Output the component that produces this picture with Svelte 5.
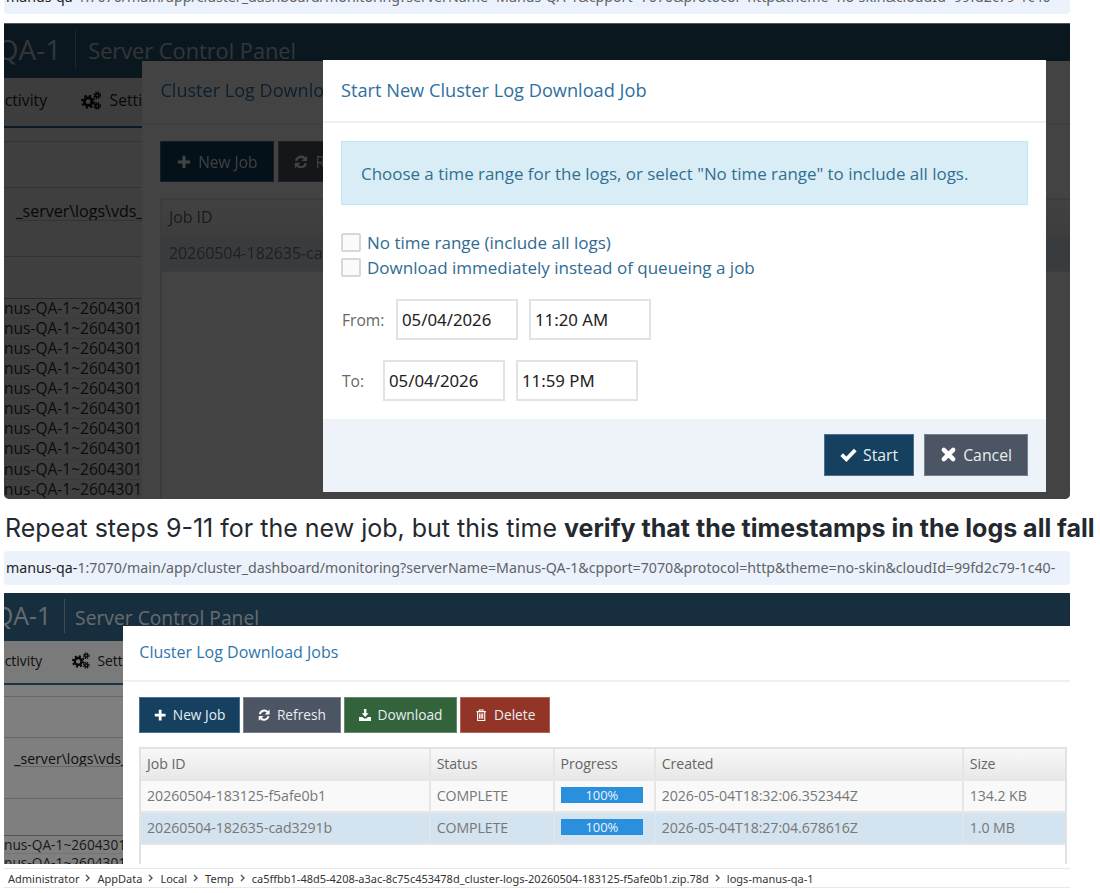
<script>
	const url = '1:7070/main/app/cluster_dashboard/monitoring?serverName=Manus-QA-1&cpport=7070&protocol=http&theme=no-skin&cloudId=99fd2c79-1c40-';
	const jobs = [
		{ id: '20260504-183125-f5afe0b1', status: 'COMPLETE', created: '2026-05-04T18:32:06.352344Z', size: '134.2 KB' },
		{ id: '20260504-182635-cad3291b', status: 'COMPLETE', created: '2026-05-04T18:27:04.678616Z', size: '1.0 MB', selected: true }
	];
	const crumbs = ['Administrator', 'AppData', 'Local', 'Temp', 'ca5ffbb1-48d5-4208-a3ac-8c75c453478d_cluster-logs-20260504-183125-f5afe0b1.zip.78d', 'logs-manus-qa-1'];
	const logRows = Array(10).fill('nus-QA-1~2604301');
</script>

{#snippet plus()}
	<svg class="ic" viewBox="0 0 16 16"><path d="M6.2 1h3.6v5.2H15v3.6H9.8V15H6.2V9.8H1V6.2h5.2z" fill="currentColor" /></svg>
{/snippet}
{#snippet refresh()}
	<svg class="ic" viewBox="0 0 16 16"><path d="M2.4 6.6A5.8 5.8 0 0 1 12.4 4M13.6 9.4A5.8 5.8 0 0 1 3.6 12" fill="none" stroke="currentColor" stroke-width="2.6" /><path d="M15 .8v6.2H8.8zM1 15.2V9h6.2z" fill="currentColor" /></svg>
{/snippet}
{#snippet download()}
	<svg class="ic" viewBox="0 0 16 16"><path d="M6.4 0h3.2v5.4h2.8L8 10.4 3.6 5.4h2.8zM0 10.4h4.4L6.4 12.4h3.2l2-2H16V15.4H0z" fill="currentColor" /></svg>
{/snippet}
{#snippet trash()}
	<svg class="ic" viewBox="0 0 16 16"><path d="M5.6 3V1.2h4.8V3M2 3.4h12M3.4 3.4v11.4h9.2V3.4M6 5.8v6.8M8 5.8v6.8M10 5.8v6.8" fill="none" stroke="currentColor" stroke-width="1.4" /></svg>
{/snippet}
{#snippet check()}
	<svg class="ic" viewBox="0 0 16 16"><path d="M1.6 8.2l4.4 4.4 8.4-8.8" fill="none" stroke="currentColor" stroke-width="3.6" /></svg>
{/snippet}
{#snippet times()}
	<svg class="ic" viewBox="0 0 16 16"><path d="M3.6 3.6l8.8 8.8M12.4 3.6l-8.8 8.8" fill="none" stroke="currentColor" stroke-width="4.2" stroke-linecap="round" /></svg>
{/snippet}
{#snippet cogs()}
	<svg class="cogs" viewBox="0 0 20 18">
		<g fill="none" stroke="currentColor">
			<circle cx="7.5" cy="10" r="3.6" stroke-width="2.6" />
			<circle cx="7.5" cy="10" r="5.6" stroke-width="2" stroke-dasharray="2.2 2.2" />
			<circle cx="16" cy="4" r="1.6" stroke-width="1.6" />
			<circle cx="16" cy="4" r="3" stroke-width="1.3" stroke-dasharray="1.3 1.1" />
			<circle cx="16" cy="14" r="1.6" stroke-width="1.6" />
			<circle cx="16" cy="14" r="3" stroke-width="1.3" stroke-dasharray="1.3 1.1" />
		</g>
	</svg>
{/snippet}

{#snippet appPage()}
	<div class="page">
		<header class="app-head">
			<span class="brand">QA-1</span>
			<span class="sub">Server Control Panel</span>
		</header>
		<nav class="app-nav">
			<span class="tab">ctivity</span>
			{@render cogs()}
			<span class="tab">Settings</span>
		</nav>
		<div class="sec s1"></div>
		<div class="sec s2"></div>
		<div class="sec s3">_server\logs\vds_server.log</div>
		<div class="sec s4"></div>
		<div class="sec s5"></div>
		{#each logRows as row}
			<div class="log-row">{row}</div>
		{/each}
	</div>
{/snippet}

{#snippet jobsModal(rows)}
	<div class="backdrop"></div>
	<section class="jobs">
		<h3 class="jobs-title">Cluster Log Download Jobs</h3>
		<div class="toolbar">
			<button class="btn navy">{@render plus()}New Job</button>
			<button class="btn slate">{@render refresh()}Refresh</button>
			<button class="btn green">{@render download()}Download</button>
			<button class="btn red">{@render trash()}Delete</button>
		</div>
		<div class="grid-wrap">
			<div class="jobs-row head">
				<span>Job ID</span><span>Status</span><span>Progress</span><span>Created</span><span>Size</span>
			</div>
			{#each rows as job}
				<div class="jobs-row" class:selected={job.selected}>
					<span>{job.id}</span>
					<span>{job.status}</span>
					<span class="prog"><i>100%</i></span>
					<span>{job.created}</span>
					<span>{job.size}</span>
				</div>
			{/each}
		</div>
	</section>
{/snippet}

<main>
	<div class="url-bar clipped"><b>manus-qa-</b>{url}</div>

	<div class="shot first">
		{@render appPage()}
		{@render jobsModal([jobs[1]])}
		<div class="backdrop"></div>
		<section class="form-modal">
			<h3>Start New Cluster Log Download Job</h3>
			<div class="body">
				<div class="alert">Choose a time range for the logs, or select "No time range" to include all logs.</div>
				<label class="chk"><span class="box"></span>No time range (include all logs)</label>
				<label class="chk"><span class="box"></span>Download immediately instead of queueing a job</label>
				<div class="range from">
					<span>From:</span>
					<span class="field">05/04/2026</span>
					<span class="field">11:20 AM</span>
				</div>
				<div class="range to">
					<span>To:</span>
					<span class="field">05/04/2026</span>
					<span class="field">11:59 PM</span>
				</div>
			</div>
			<footer>
				<button class="btn navy">{@render check()}Start</button>
				<button class="btn slate">{@render times()}Cancel</button>
			</footer>
		</section>
	</div>

	<p class="step">Repeat steps 9-11 for the new job, but this time <strong>verify that the timestamps in the logs all fall</strong></p>

	<div class="url-bar"><b>manus-qa-</b>{url}</div>

	<div class="shot second">
		{@render appPage()}
		{@render jobsModal(jobs)}
	</div>

	<div class="crumbs">
		{#each crumbs as c, i}
			{#if i > 0}
				<svg class="chev" viewBox="0 0 8 8"><path d="M2 1l3 3-3 3" fill="none" stroke="#555" stroke-width="1.4" /></svg>
			{/if}
			<span>{c}</span>
		{/each}
	</div>
</main>

<style>
	:global(body) {
		margin: 0;
		background: #fff;
	}

	main {
		width: 1100px;
		height: 893px;
		overflow: hidden;
		padding: 0 0 0 4px;
		box-sizing: border-box;
		font-family: 'Open Sans', sans-serif;
	}

	.url-bar {
		width: 1066px;
		height: 34px;
		line-height: 34px;
		background: #ecf2fb;
		border-radius: 4px;
		padding-left: 2px;
		box-sizing: border-box;
		font-family: 'Noto Sans', sans-serif;
		font-size: 14.2px;
		color: #5f6368;
		white-space: nowrap;
		overflow: hidden;
	}

	.url-bar b {
		font-weight: 400;
		color: #222;
	}

	.url-bar.clipped {
		margin-top: -20px;
	}

	.shot {
		position: relative;
		width: 1066px;
		overflow: hidden;
		color: #333;
	}

	.shot.first {
		height: 476px;
		margin-top: 9px;
		font-size: 16px;
		border-radius: 0 0 5px 5px;
		border-top: 1px solid #555;
		box-sizing: border-box;
	}

	.shot.second {
		height: 271px;
		margin-top: 8px;
		font-size: 14.16px;
	}

	.page {
		position: relative;
		height: 100%;
		background: #fff;
	}

	.app-head {
		height: 3.4em;
		background: #2f5d7c;
		display: flex;
		align-items: center;
		color: #ccd6dd;
		overflow: hidden;
		white-space: nowrap;
	}

	.brand {
		font-size: 1.75em;
		padding-right: 0.5em;
		margin-left: -0.26em;
		border-right: 1px solid #7d99ad;
		height: 1.38em;
		line-height: 1.38em;
		margin-top: -0.12em;
	}

	.second .brand {
		margin-left: -0.4em;
		margin-top: -0.1em;
	}

	.sub {
		font-size: 1.36em;
		margin-left: 0.55em;
		margin-top: 0.08em;
	}

	.first .sub {
		margin-top: -0.05em;
	}

	.app-nav {
		height: 3.1em;
		background: #f4f4f4;
		border-bottom: 2px solid #2f6a96;
		box-sizing: border-box;
		display: flex;
		align-items: center;
		white-space: nowrap;
		font-size: 1em;
		color: #222;
		padding-bottom: 0.25em;
	}

	.tab {
		font-size: 0.98em;
	}

	.tab:first-child {
		margin-right: 2.1em;
		margin-left: 0.05em;
	}

	.cogs {
		width: 1.35em;
		height: 1.2em;
		margin-right: 0.5em;
		color: #111;
	}

	.sec {
		border-bottom: 1px solid #cfcfcf;
		box-sizing: border-box;
		white-space: nowrap;
		overflow: hidden;
		color: #222;
		font-size: 1em;
	}

	.s1 { height: 0.88em; }
	.s2 { height: 2.88em; }
	.s3 { height: 2.06em; line-height: 2.9em; margin-left: 0.72em; }
	.s4 { height: 2.25em; }
	.s5 { height: 2.62em; border-bottom-color: #aaa; }

	.log-row {
		height: 1.293em;
		line-height: 1.25em;
		font-size: 0.97em;
		white-space: nowrap;
		color: #333;
		border-bottom: 1px solid #e8e8e8;
		box-sizing: border-box;
	}

	.backdrop {
		position: absolute;
		inset: 0;
		background: rgba(0, 0, 0, 0.5);
	}

	.jobs {
		position: absolute;
		top: 2.33em;
		left: 138px;
		width: 72em;
		height: 40em;
		background: #fff;
		display: flex;
		flex-direction: column;
	}

	.shot.first .jobs {
		filter: brightness(0.53);
	}

	.shot.second .jobs {
		left: 119px;
	}

	.jobs-title {
		margin: 0;
		font-size: 1.13em;
		height: 3.5em;
		line-height: 3.3em;
		padding-left: 1.02em;
		box-sizing: border-box;
		border-bottom: 2px solid #f0f0f0;
		font-weight: 400;
		color: #2f76ad;
	}

	.toolbar {
		display: flex;
		gap: 0.22em;
		padding: 1.05em 0 0 1.14em;
	}

	.btn {
		display: flex;
		align-items: center;
		gap: 0.48em;
		height: 2.62em;
		padding: 0 1em;
		border: 1px solid rgba(255, 255, 255, 0.25);
		box-sizing: border-box;
		font-family: 'Open Sans', sans-serif;
		font-size: 0.97em;
		color: #e8edf1;
		white-space: nowrap;
	}

	.ic {
		width: 0.9em;
		height: 0.9em;
		flex: none;
		color: #fff;
	}

	.navy { background: #154060; }
	.slate { background: #4b5563; }
	.green { background: #33633a; }
	.red { background: #933526; }

	.grid-wrap {
		margin: 0.97em 0 0 1.14em;
		width: 65.5em;
		flex: 1;
		border: 2px solid #e2e2e2;
		border-bottom: 0;
		box-sizing: border-box;
	}

	.jobs-row {
		display: grid;
		grid-template-columns: 20.45em 8.75em 7.15em 21.75em 1fr;
		height: 2.26em;
		align-items: stretch;
		background: #f9f9f9;
		border-bottom: 2px solid #e6e6e6;
		box-sizing: border-box;
		color: #777;
		font-size: 1em;
		white-space: nowrap;
	}

	.jobs-row span {
		display: flex;
		align-items: center;
		padding-left: 0.42em;
		border-right: 2px solid #e6e6e6;
		box-sizing: border-box;
		min-width: 0;
		letter-spacing: -0.005em;
	}

	.jobs-row.head {
		background: linear-gradient(#f8f8f8, #e8e8e8);
		color: #666;
	}

	.jobs-row.selected {
		background: #d3e3ef;
	}

	.jobs-row.selected span {
		border-right-color: #dce6ee;
	}

	.jobs-row span:last-child {
		border-right: 0;
	}

	.jobs-row .prog i {
		display: block;
		width: 6.35em;
		height: 1.25em;
		line-height: 1.25em;
		background: #2a8fdc;
		color: #eaf4fc;
		font-style: normal;
		text-align: center;
		font-size: 0.92em;
		margin-top: -0.1em;
	}

	.form-modal {
		position: absolute;
		left: 319px;
		top: 36px;
		width: 723px;
		height: 432px;
		background: #fff;
		display: flex;
		flex-direction: column;
		font-size: 16px;
		color: #31708f;
	}

	.form-modal h3 {
		margin: 0;
		height: 63px;
		box-sizing: border-box;
		border-bottom: 2px solid #f0f0f0;
		padding-left: 18px;
		line-height: 61px;
		font-size: 18.2px;
		font-weight: 400;
		color: #2f6f9f;
	}

	.body {
		flex: 1;
		padding: 18px 18px 0;
	}

	.alert {
		height: 64px;
		line-height: 63px;
		box-sizing: border-box;
		background: #d9edf7;
		border: 1px solid #bce8f1;
		padding-left: 19px;
		font-size: 16.93px;
		color: #31708f;
		margin-bottom: 25px;
		white-space: nowrap;
	}

	.chk {
		display: flex;
		align-items: center;
		gap: 6px;
		height: 25px;
		font-size: 17px;
		color: #2f6b93;
	}

	.box {
		width: 20px;
		height: 19px;
		box-sizing: border-box;
		background: #fbfbfb;
		border: 2px solid #d8d8d8;
		border-radius: 2px;
	}

	.range {
		display: flex;
		align-items: center;
		height: 41px;
		color: #666;
		font-size: 15.6px;
	}

	.range.from {
		margin-top: 19px;
	}

	.range.to {
		margin-top: 20px;
	}

	.range span:first-child {
		margin-left: 1px;
	}

	.from span:first-child { width: 54px; }
	.to span:first-child { width: 41px; }

	.range .field {
		width: 122px;
		height: 41px;
		line-height: 37px;
		box-sizing: border-box;
		border: 2px solid #e3e3e3;
		padding-left: 4px;
		margin-right: 11px;
		font-family: 'Noto Sans', sans-serif;
		font-size: 16.8px;
		color: #222;
	}

	footer {
		height: 73px;
		box-sizing: border-box;
		background: #eef2f9;
		display: flex;
		justify-content: flex-end;
		align-items: center;
		gap: 10px;
		padding: 0 18px 2px 0;
	}

	.form-modal .btn {
		height: 42px;
		padding: 0 15px;
		gap: 6px;
		font-size: 15.8px;
	}

	.form-modal .ic {
		width: 17px;
		height: 17px;
	}

	.step {
		margin: 16px 0 9px 1px;
		height: 27px;
		line-height: 27px;
		font-family: Inter, sans-serif;
		font-size: 25px;
		color: #24292f;
		white-space: nowrap;
	}

	.step strong {
		font-weight: 700;
	}

	.crumbs {
		margin-top: 4px;
		width: 1066px;
		height: 20px;
		box-sizing: border-box;
		border-top: 1px solid #e8e8e8;
		border-bottom: 1px solid #e8e8e8;
		display: flex;
		align-items: center;
		gap: 5px;
		padding-left: 4px;
		font-family: 'Noto Sans', sans-serif;
		font-size: 11px;
		color: #333;
		white-space: nowrap;
	}

	.chev {
		width: 8px;
		height: 8px;
	}
</style>
